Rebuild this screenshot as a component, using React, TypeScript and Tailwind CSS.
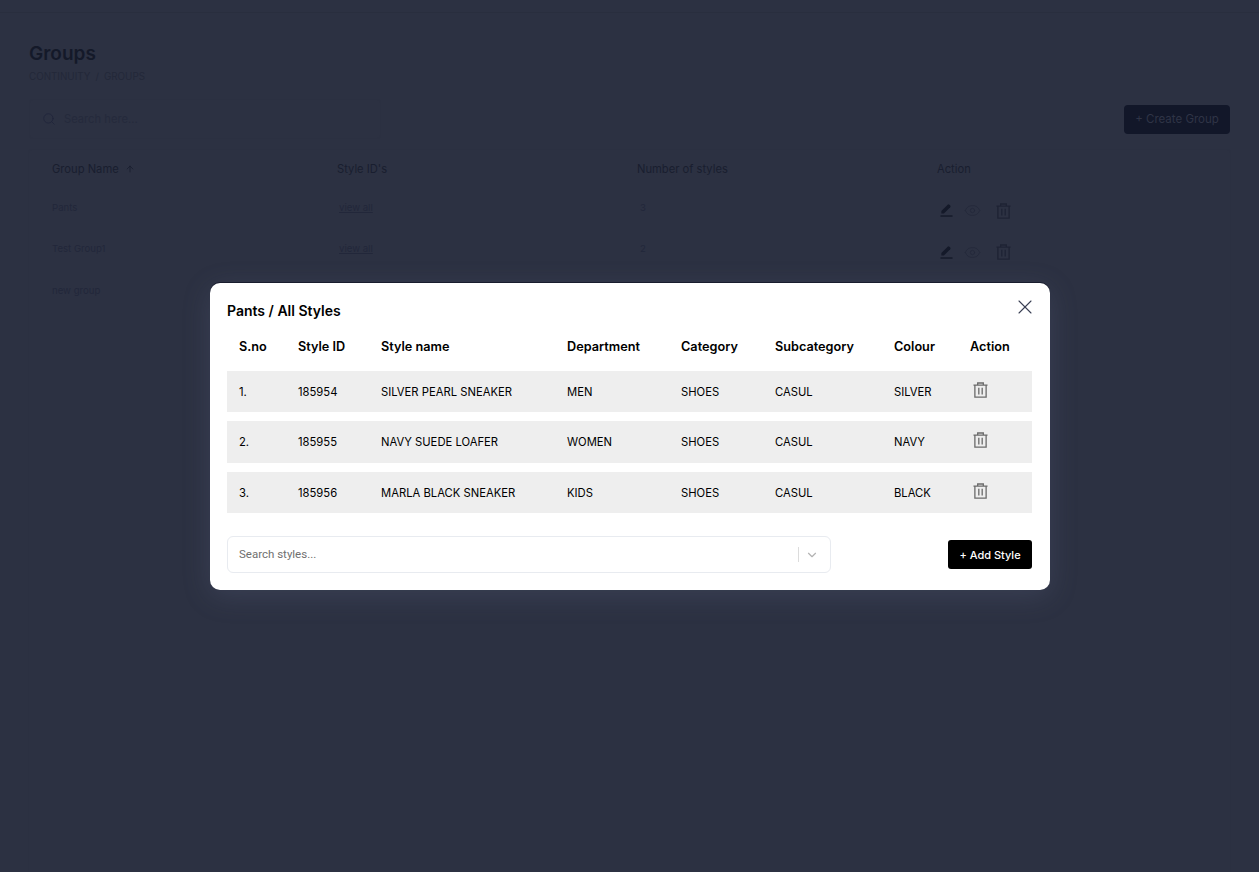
import { Search, X, ChevronDown, ArrowUp, Eye } from "lucide-react";

type Group = { name: string; count: string; actions: boolean };
type Style = { no: string; id: string; name: string; dept: string; cat: string; sub: string; colour: string };

const groups: Group[] = [
  { name: "Pants", count: "3", actions: true },
  { name: "Test Group1", count: "2", actions: true },
  { name: "new group", count: "", actions: false },
];

const styles: Style[] = [
  { no: "1.", id: "185954", name: "SILVER PEARL SNEAKER", dept: "MEN", cat: "SHOES", sub: "CASUL", colour: "SILVER" },
  { no: "2.", id: "185955", name: "NAVY SUEDE LOAFER", dept: "WOMEN", cat: "SHOES", sub: "CASUL", colour: "NAVY" },
  { no: "3.", id: "185956", name: "MARLA BLACK SNEAKER", dept: "KIDS", cat: "SHOES", sub: "CASUL", colour: "BLACK" },
];

const modalCols = "grid grid-cols-[59px_83px_186px_114px_94px_119px_76px_1fr] pl-3";
const pageCols = "grid grid-cols-[285px_300px_300px_1fr] pl-[23px]";

const TrashIcon = ({ className }: { className: string }) => (
  <svg viewBox="0 0 16 17" fill="none" stroke="currentColor" strokeWidth="1.4" className={className}>
    <path d="M0.5 3.2h15M5 3.2V1h6v2.2M2 3.2V16h12V3.2" />
    <path d="M6.2 6.2v7M9.8 6.2v7" />
  </svg>
);

const EditIcon = () => (
  <svg viewBox="0 0 14 16" className="w-[13px] h-[15px] text-[#141929]" fill="currentColor">
    <path d="M1.5 11.2 1.5 8.6 8.3 1.8a1.3 1.3 0 0 1 1.8 0l.9.9a1.3 1.3 0 0 1 0 1.8L4.2 11.2Z" />
    <rect x="0.5" y="13.2" width="13" height="1.5" />
  </svg>
);

export default function App() {
  return (
    <div className="relative h-[872px] overflow-hidden bg-[#2c3142] font-['Inter',sans-serif]">
      <div className="h-[13px] border-b border-[#292e3e]" />

      <div className="px-[29px] pt-[27px]">
        <h1 className="text-[19px] leading-7 font-semibold text-[#141929]">Groups</h1>
        <div className="mt-px flex gap-[5px] text-[9.8px] leading-4 text-[#232839]">
          <span>CONTINUITY</span>
          <span>/</span>
          <span>GROUPS</span>
        </div>

        <div className="flex justify-between items-center mt-[14px]">
          <div className="flex items-center gap-2 w-[352px] h-[40px] pl-3 rounded border border-[#2b3041]">
            <Search size={14} strokeWidth={1.5} className="text-[#20253a]" />
            <span className="text-[11.2px] text-[#252a3c]">Search here...</span>
          </div>
          <div className="h-[29px] w-[106px] pt-px flex items-center justify-center rounded bg-[#121729] text-[11.5px] text-[#2f3446]">
            + Create Group
          </div>
        </div>

        <div className="mt-[10px] -mx-px w-[1203px] h-[730px] rounded border border-[#2b3041] pt-[9px]">
          <div className={pageCols + " text-[11.2px] leading-5 text-[#191e2f]"}>
            <div className="flex items-center gap-1.5">
              Group Name <ArrowUp size={10} />
            </div>
            <div>Style ID's</div>
            <div>Number of styles</div>
            <div>Action</div>
          </div>
          <div className="mt-[8px]">
            {groups.map((g) => (
              <div key={g.name} className={pageCols + " h-[41.5px] items-center text-[9.6px] text-[#22273a]"}>
                <div>{g.name}</div>
                {g.actions ? (
                  <>
                    <div className="pl-[2px] underline">view all</div>
                    <div className="pl-[3px]">{g.count}</div>
                    <div className="flex items-center pt-[6px] pl-[3px]">
                      <EditIcon />
                      <Eye size={17} strokeWidth={1.2} className="ml-[11px] text-[#23283a]" />
                      <TrashIcon className="ml-[15px] w-[15px] h-[16px] text-[#1e2334]" />
                    </div>
                  </>
                ) : null}
              </div>
            ))}
          </div>
        </div>
      </div>

      {/* modal sits over the dimmed page */}
      <div className="absolute left-[210px] top-[283px] w-[840px] h-[307px] rounded-[10px] bg-white pl-[17px] pr-[18px] pt-[18px] text-black shadow-[0_-1px_0_#191d2e,0_6px_28px_rgba(110,118,150,0.22)]">
        <div className="flex justify-between">
          <h2 className="text-[14px] leading-5 font-semibold">Pants / All Styles</h2>
          <X size={24} strokeWidth={1.1} className="text-[#3a4054] -mt-[6px] mr-[-5px]" />
        </div>

        <div className={modalCols + " mt-[16px] h-5 items-center text-[12.7px] font-semibold"}>
          <div>S.no</div>
          <div>Style ID</div>
          <div>Style name</div>
          <div>Department</div>
          <div>Category</div>
          <div>Subcategory</div>
          <div>Colour</div>
          <div>Action</div>
        </div>

        <div className="mt-[14px] flex flex-col gap-[9px]">
          {styles.map((s) => (
            <div key={s.id} className={modalCols + " h-[41.25px] pt-[2px] items-center bg-[#eeeeee] text-[11.25px]"}>
              <div>{s.no}</div>
              <div>{s.id}</div>
              <div>{s.name}</div>
              <div>{s.dept}</div>
              <div>{s.cat}</div>
              <div>{s.sub}</div>
              <div>{s.colour}</div>
              <div className="pl-[3px] -mt-[5px]">
                <TrashIcon className="w-[15px] h-[16px] text-[#6b6b6b]" />
              </div>
            </div>
          ))}
        </div>

        <div className="mt-[23.25px] flex items-center justify-between">
          <div className="flex items-center justify-between w-[604px] h-[37px] pl-[11px] pr-[11px] rounded-[6px] border border-[#e8ebf0]">
            <span className="font-['Roboto',sans-serif] text-[11.5px] text-[#6f6f6f]">Search styles...</span>
            <div className="flex items-center gap-1.5">
              <div className="w-[1.5px] h-[15px] bg-[#dcdcdc]" />
              <ChevronDown size={14} className="text-[#b3b3b3]" />
            </div>
          </div>
          <div className="w-[84px] h-[29px] pt-px flex items-center justify-center rounded-[3px] bg-black text-white text-[11px] font-medium">
            + Add Style
          </div>
        </div>
      </div>
    </div>
  );
}
